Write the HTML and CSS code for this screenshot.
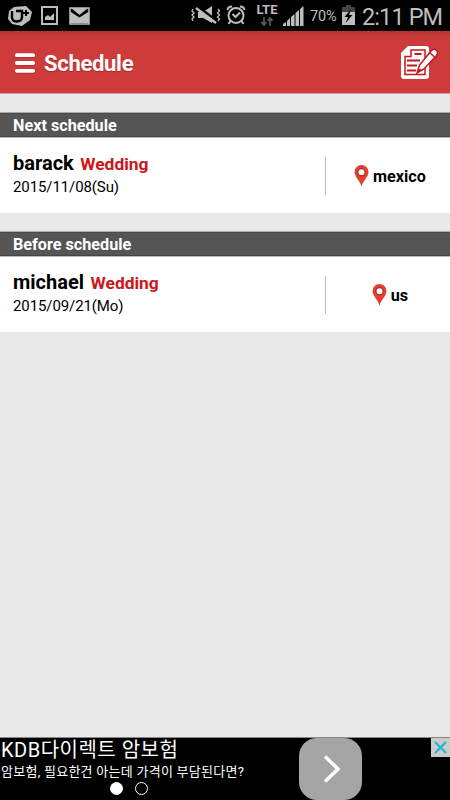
FILE: index.html
```html
<!DOCTYPE html>
<html lang="en">
<head>
<meta charset="utf-8">
<title>Schedule</title>
<link rel="stylesheet" href="styles.css">
</head>
<body>
<div class="screen">
  <div class="status">
    <svg class="brand" width="24" height="21" viewBox="0 0 24 21"><path d="M6 1L18 0L24 6L22 14L14 20L4 18L0 13L1 5Z" fill="#bdbdbd"/><path d="M4 5V11Q4 15.500 8.500 15.500Q14 15.500 14 11V5H8" fill="none" stroke="#000" stroke-width="2.400"/><path d="M15 7H21M18 4V10" fill="none" stroke="#000" stroke-width="2"/></svg>
    <svg class="photo" width="17" height="19" viewBox="0 0 17 19"><path d="M1 1H16V18H1Z" fill="none" stroke="#bdbdbd" stroke-width="2"/><path d="M4 14V11L7 9L9 11L13 7V14Z" fill="#bdbdbd"/></svg>
    <svg class="mail" width="21" height="18" viewBox="0 0 21 18"><path d="M1 1H20V17H1Z" fill="#000" stroke="#bdbdbd" stroke-width="1.500"/><path d="M1 4.500L10.500 10.500L20 4.500V16H1Z" fill="#bdbdbd"/><path d="M2 1H19L10.500 8Z" fill="#bdbdbd"/></svg>
    <svg class="mute" width="30" height="19" viewBox="0 0 30 19"><path d="M7 6H12L21 0V17L12 12H7Z" fill="#bdbdbd"/><path d="M7 1L27 16" stroke="#000" stroke-width="3"/><path d="M5 2L25 17" stroke="#bdbdbd" stroke-width="2.300"/><path d="M2 3L1 5L3 7L1 9L3 11L1 13L2 15M27 3L28.500 5L26.500 7L28.500 9L26.500 11L28.500 13L27 15" fill="none" stroke="#bdbdbd" stroke-width="1.300"/></svg>
    <svg class="alarm" width="20" height="20" viewBox="0 0 20 20"><circle cx="10" cy="10.500" r="7.500" fill="none" stroke="#bdbdbd" stroke-width="2"/><path d="M1.500 5Q2 1.500 6 1.500M14 1.500Q18 1.500 18.500 5M4.500 16L2.500 19M15.500 16L17.500 19M6.500 9L9.500 12L14 7.500" fill="none" stroke="#bdbdbd" stroke-width="2"/></svg>
    <div class="lte"><span>LTE</span><svg width="12" height="9" viewBox="0 0 12 9"><path d="M3 0V7M.500 5L3 8L5.500 5M9 9V2M6.500 4L9 1L11.500 4" fill="none" stroke="#555" stroke-width="1.800"/></svg></div>
    <svg class="signal" width="21" height="20" viewBox="0 0 21 20"><path d="M0 20V18L3 16V20ZM4 20V15L7 12V20ZM8 20V11L11.500 8V20ZM12.500 20V7L16 4V20ZM17 20V3L20.500 0V20Z" fill="#bdbdbd"/></svg>
    <span class="percent">70%</span>
    <svg class="battery" width="13" height="20" viewBox="0 0 13 20"><path d="M4 0H9V2H13V7H0V2H4Z" fill="#444"/><path d="M0 7H13V20H0Z" fill="#bdbdbd"/><path d="M9 4L2.500 12H6L3.500 18L10.500 10H7Z" fill="#000"/></svg>
    <span class="clock">2:11 PM</span>
  </div>
  <header class="header">
    <svg class="menu" width="20" height="20" viewBox="0 0 20 20"><path d="M1.800 2.500H18.200M1.800 10.500H18.200M1.800 18.500H18.200" stroke="#a91515" stroke-width="4.500" stroke-linecap="round" opacity=".5"/><path d="M1.800 2.200H18.200M1.800 10H18.200M1.800 17.800H18.200" stroke="#fff" stroke-width="3.800" stroke-linecap="round"/></svg>
    <h1>Schedule</h1>
    <svg class="edit" width="38" height="35" viewBox="0 0 38 35"><path d="M8 1H26Q29 1 29 4V31Q29 34 26 34H4Q1 34 1 31V8Z" fill="#fff"/><path d="M11 5H25V29.500H5V11.500H11Z" fill="none" stroke="#c4161c" stroke-width="1.500"/><path d="M14.500 8H21.500V10H14.500Z" fill="#c4161c"/><path d="M7 15.500H20M7 20.500H17M7 25.500H16" stroke="#c4161c" stroke-width="2"/><path d="M17 28L19.500 20L31 6Q34 3 36.500 5.500Q39 8 36 11L24 24Z" fill="#fff" stroke="#c4161c" stroke-width="1.500"/><path d="M29.500 7.500L34.500 12M18 27L20.500 24" stroke="#c4161c" stroke-width="1.500"/></svg>
  </header>
  <main class="content">
    <section>
      <h2>Next schedule</h2>
      <div class="event">
        <div class="details">
          <div class="title"><span class="name">barack</span><span class="kind">Wedding</span></div>
          <div class="date">2015/11/08(Su)</div>
        </div>
        <div class="place"><svg width="15" height="22" viewBox="0 0 15 22"><path d="M7.500 21.500C6 16 .500 12 .500 7A7 7 0 0 1 14.500 7C14.500 12 9 16 7.500 21.500Z" fill="#e3402f"/><circle cx="7.500" cy="7.200" r="3.600" fill="#fff" stroke="#a32b20" stroke-width="1.200"/></svg><span>mexico</span></div>
      </div>
    </section>
    <section>
      <h2>Before schedule</h2>
      <div class="event">
        <div class="details">
          <div class="title"><span class="name">michael</span><span class="kind">Wedding</span></div>
          <div class="date">2015/09/21(Mo)</div>
        </div>
        <div class="place"><svg width="15" height="22" viewBox="0 0 15 22"><path d="M7.500 21.500C6 16 .500 12 .500 7A7 7 0 0 1 14.500 7C14.500 12 9 16 7.500 21.500Z" fill="#e3402f"/><circle cx="7.500" cy="7.200" r="3.600" fill="#fff" stroke="#a32b20" stroke-width="1.200"/></svg><span>us</span></div>
      </div>
    </section>
  </main>
  <footer class="ad">
    <div class="copy">
      <div class="headline">KDB다이렉트 암보험</div>
      <div class="tagline">암보험, 필요한건 아는데 가격이 부담된다면?</div>
      <div class="dots"><i class="dot active"></i><i class="dot"></i></div>
    </div>
    <div class="go"><svg width="18" height="28" viewBox="0 0 18 28"><path d="M2 1.500L15 14L2 26.500" fill="none" stroke="#fff" stroke-width="3.500"/></svg></div>
    <div class="close"><svg width="13" height="13" viewBox="0 0 13 13"><path d="M1 1L12 12M12 1L1 12" stroke="#20b5d2" stroke-width="2"/></svg></div>
  </footer>
</div>
</body>
</html>
```
FILE: styles.css
```css
* { box-sizing: border-box; }
body { margin: 0; font-family: Roboto, "Noto Sans CJK KR", sans-serif; }
h1, h2 { margin: 0; font-weight: 700; }
svg { display: block; flex: none; overflow: visible; }
.screen { width: 450px; height: 800px; display: flex; flex-direction: column; background: #e9e9e9; overflow: hidden; white-space: nowrap; }
.status { height: 31px; flex: none; display: flex; align-items: flex-start; background: #000; color: #bdbdbd; padding-left: 8px; }
.brand { margin-top: 6px; }
.photo { margin: 6px 0 0 9px; }
.mail { margin: 7px 0 0 11px; }
.mute { margin: 6px 0 0 101px; }
.alarm { margin: 5px 0 0 5px; }
.lte { width: 22px; margin: 4px 0 0 10px; display: flex; flex-direction: column; align-items: center; font-size: 13px; font-weight: 700; line-height: 12px; }
.lte svg { margin-top: 1px; }
.signal { margin: 6px 0 0 5px; }
.percent { width: 28px; margin: 8px 0 0 6px; font-size: 14.5px; line-height: 17px; letter-spacing: -0.1px; }
.battery { margin: 5px 0 0 4px; }
.clock { margin: 3px 0 0 7px; font-size: 23.5px; line-height: 28px; letter-spacing: -0.9px; }
.header { height: 63px; flex: none; display: flex; align-items: center; padding: 0 12px 0 15px; background: linear-gradient(#b73232 0, #c43939 4px, #cd3b3b 10px); color: #fff; border-bottom: 1px solid #d99a9a; }
.header h1 { margin: 4px 0 0 9px; font-size: 22px; line-height: 28px; letter-spacing: -0.3px; text-shadow: 0 1px 1px #a92323; }
.menu { margin-top: 1px; }
.edit { margin-left: auto; }
.content { flex: 1; display: flex; flex-direction: column; gap: 18px; padding-top: 18px; }
.content h2 { height: 26px; padding-left: 13px; border-top: 1px solid #aaa; border-bottom: 1px solid #bbb; background: #555; box-shadow: inset 0 1px #494949, inset 0 -1px #444; color: #fff; font-size: 16.2px; line-height: 26px; }
.event { height: 75px; display: flex; align-items: center; background: #fff; color: #000; }
.details { width: 326px; height: 38px; padding-left: 13px; border-right: 1px solid #bbb; }
.title { height: 20px; margin-top: -4px; display: flex; align-items: baseline; gap: 6.5px; line-height: 20px; }
.name { font-size: 20px; font-weight: 700; }
.kind { color: #cc1719; font-size: 17.4px; font-weight: 700; }
.date { margin-top: 4px; font-size: 15px; line-height: 20px; letter-spacing: -0.1px; }
.place { flex: 1; display: flex; align-items: center; justify-content: center; gap: 4px; padding-left: 4px; font-size: 16.2px; font-weight: 700; }
.place span { padding-top: 2px; }
.ad { height: 63px; flex: none; display: flex; align-items: flex-start; background: #000; color: #fff; border-top: 1px solid #888; }
.copy { width: 299px; padding-left: 1px; }
.headline { padding-top: 1px; font-size: 20px; line-height: 23px; letter-spacing: 0.5px; }
.tagline { font-size: 13px; line-height: 19px; letter-spacing: 0.26px; }
.dots { display: flex; gap: 12px; padding-left: 109px; margin-top: 1px; }
.dot { width: 13px; height: 13px; border: 1.5px solid #fff; border-radius: 50%; }
.active { background: #fff; }
.go { width: 63px; height: 62px; display: flex; align-items: center; justify-content: center; padding-left: 2px; border-radius: 18px; background: #a5a5a5; }
.close { width: 19px; height: 19px; margin-left: auto; display: flex; align-items: center; justify-content: center; background: #ccc; }
```
